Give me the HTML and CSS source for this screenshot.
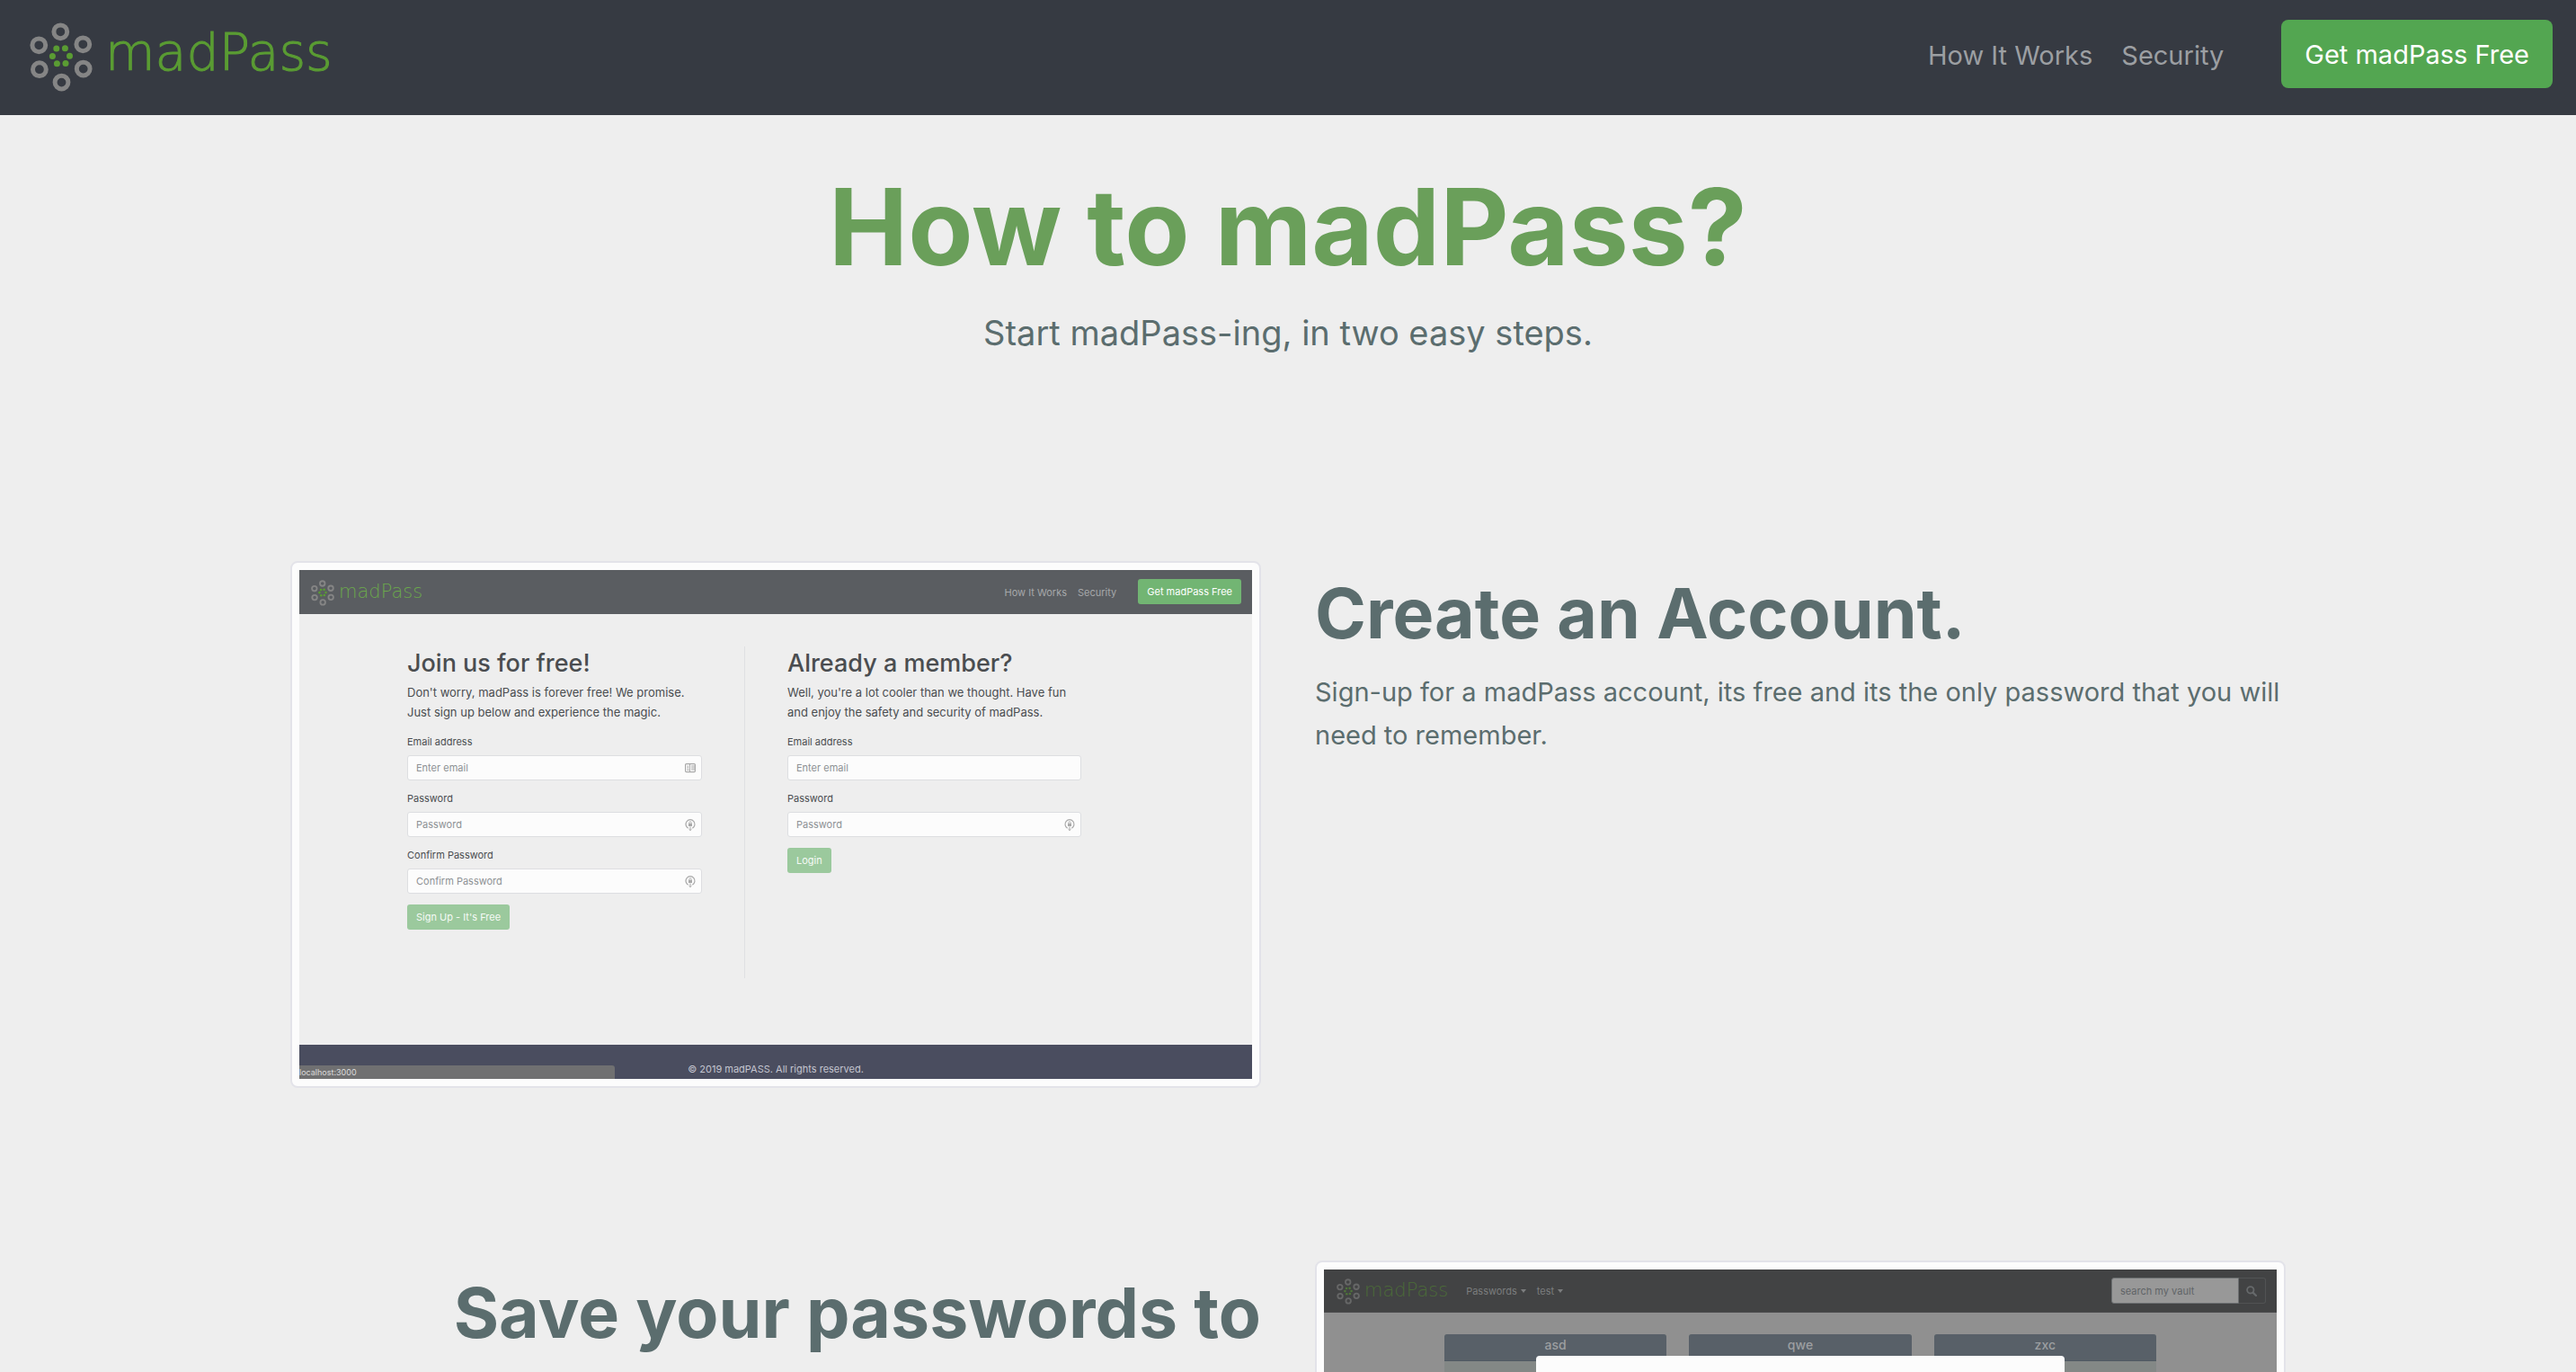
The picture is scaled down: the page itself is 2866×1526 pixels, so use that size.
FILE: index.html
```html
<!DOCTYPE html>
<html lang="en">
<head>
  <meta charset="utf-8">
  <title>madPass - How It Works</title>
  <link rel="stylesheet" href="styles.css">
</head>
<body>
  <svg class="sprite" aria-hidden="true">
    <symbol id="mark" viewBox="0 0 70 77">
      <g fill="none" stroke="#858585" stroke-width="5">
        <circle cx="34.3" cy="10.3" r="7.4"/><circle cx="10.3" cy="25.3" r="7.4"/>
        <circle cx="59.3" cy="24.3" r="7.4"/><circle cx="10.9" cy="52.2" r="7.4"/>
        <circle cx="59.7" cy="51.6" r="7.4"/><circle cx="35.5" cy="66.6" r="7.4"/>
      </g>
      <g fill="#5a9c33">
        <circle cx="29.8" cy="29" r="3.5"/><circle cx="39.4" cy="28.7" r="3.5"/>
        <circle cx="25.4" cy="37.4" r="3.5"/><circle cx="44.5" cy="37.2" r="3.5"/>
        <circle cx="30.4" cy="45.8" r="3.5"/><circle cx="40" cy="45.4" r="3.5"/>
      </g>
    </symbol>
    <symbol id="lock" viewBox="0 0 12 14">
      <path d="M3.6 11.1A5 5 0 1 1 8.4 11.1" fill="none" stroke="#a9a9a9" stroke-width="1.2"/>
      <path d="M6 9.5v4M4.5 12.2 6 13.6l1.5-1.4" fill="none" stroke="#a9a9a9"/>
      <path d="M4.9 6V4.8a1.1 1.1 0 0 1 2.2 0V6" fill="none" stroke="#a9a9a9" stroke-width=".8"/>
      <rect x="4" y="5.8" width="4" height="3.2" fill="#a9a9a9"/>
    </symbol>
  </svg>

  <header class="topbar">
    <a class="brand" href="#"><svg class="brand-mark"><use href="#mark"/></svg><span class="brand-name">madPass</span></a>
    <nav class="links">
      <a href="#">How It Works</a>
      <a href="#">Security</a>
      <button class="cta" type="button">Get madPass Free</button>
    </nav>
  </header>

  <main class="page">
    <section class="intro">
      <h1>How to madPass?</h1>
      <p>Start madPass-ing, in two easy steps.</p>
    </section>

    <section class="step first">
      <div class="frame">
        <div class="shot">
          <div class="mini-bar">
            <a class="brand" href="#"><svg class="brand-mark"><use href="#mark"/></svg><span class="brand-name">madPass</span></a>
            <div class="links">
              <a href="#">How It Works</a>
              <a href="#">Security</a>
              <button class="cta" type="button">Get madPass Free</button>
            </div>
          </div>
          <div class="forms">
            <form class="form">
              <h3>Join us for free!</h3>
              <p>Don't worry, madPass is forever free! We promise.<br>Just sign up below and experience the magic.</p>
              <label for="su-email">Email address</label>
              <div class="field">
                <input id="su-email" type="email" placeholder="Enter email">
                <svg class="hint" viewBox="0 0 12 14"><rect x=".6" y="2.6" width="10.8" height="9" rx="1" fill="none" stroke="#a9a9a9" stroke-width="1.2"/><path d="M5.5 2.5v9M7 5h4M7 7h4M7 9h4M3.3 4.5v4M2.5 9.5h2" stroke="#a9a9a9"/></svg>
              </div>
              <label for="su-pass">Password</label>
              <div class="field">
                <input id="su-pass" type="password" placeholder="Password">
                <svg class="hint"><use href="#lock"/></svg>
              </div>
              <label for="su-confirm">Confirm Password</label>
              <div class="field">
                <input id="su-confirm" type="password" placeholder="Confirm Password">
                <svg class="hint"><use href="#lock"/></svg>
              </div>
              <button type="button">Sign Up - It's Free</button>
            </form>
            <form class="form">
              <h3>Already a member?</h3>
              <p>Well, you're a lot cooler than we thought. Have fun<br>and enjoy the safety and security of madPass.</p>
              <label for="li-email">Email address</label>
              <div class="field"><input id="li-email" type="email" placeholder="Enter email"></div>
              <label for="li-pass">Password</label>
              <div class="field">
                <input id="li-pass" type="password" placeholder="Password">
                <svg class="hint"><use href="#lock"/></svg>
              </div>
              <button type="button">Login</button>
            </form>
          </div>
          <div class="mini-foot">© 2019 madPASS. All rights reserved.</div>
          <div class="status">localhost:3000</div>
        </div>
      </div>
      <div class="copy">
        <h2>Create an Account.</h2>
        <p>Sign-up for a madPass account, its free and its the only password that you will need to remember.</p>
      </div>
    </section>

    <section class="step">
      <div class="copy copy-right">
        <h2>Save your passwords to</h2>
      </div>
      <div class="frame">
        <div class="shot vault">
          <div class="mini-bar dim">
            <a class="brand" href="#"><svg class="brand-mark"><use href="#mark"/></svg><span class="brand-name">madPass</span></a>
            <div class="menus">
              <a href="#">Passwords</a>
              <a href="#">test</a>
            </div>
            <form class="search">
              <input type="search" aria-label="search my vault" placeholder="search my vault">
              <button type="button" aria-label="Search"><svg viewBox="0 0 12 12"><circle cx="4.8" cy="4.8" r="3.7" fill="none" stroke="#66696b" stroke-width="1.8"/><path d="M7.6 7.6 11 11" stroke="#66696b" stroke-width="2.2" stroke-linecap="round"/></svg></button>
            </form>
          </div>
          <div class="cards">
            <article class="card"><h4>asd</h4></article>
            <article class="card"><h4>qwe</h4></article>
            <article class="card"><h4>zxc</h4></article>
          </div>
          <div class="modal"></div>
        </div>
      </div>
    </section>
  </main>
</body>
</html>
```

FILE: styles.css
```css
* { box-sizing: border-box; }

body {
  display: flex;
  flex-direction: column;
  margin: 0;
  height: 100vh;
  overflow: hidden;
  background: #eee;
  color: #5b6d6e;
  font-family: Inter, "Liberation Sans", sans-serif;
  font-size: 29px;
}

h1, h2, h3, h4, p { margin: 0; }
a { color: inherit; text-decoration: none; }
button, input { font: inherit; }
.sprite { position: absolute; width: 0; height: 0; }

/* top bar */
.topbar {
  display: flex;
  flex: none;
  justify-content: space-between;
  align-items: flex-start;
  height: 128px;
  padding: 22px 26px 0 33px;
  background: #363a42;
}
.brand { display: flex; align-items: flex-start; gap: 14px; }
.brand-mark { width: 70px; height: 77px; margin-top: 3px; }
.brand-name {
  color: #5a9c33;
  font-family: "DejaVu Sans Light", "DejaVu Sans", sans-serif;
  font-size: 57px;
  font-weight: 200;
  line-height: 72px;
}
.topbar .brand-name { -webkit-text-stroke: 1px #5a9c33; }
.links { display: flex; align-items: center; gap: 32px; color: #9c9fa2; }
.topbar .links a { padding-top: 2px; }
.cta {
  height: 76px;
  margin-left: 32px;
  padding: 0 26px;
  border: 0;
  border-radius: 8px;
  background: #53a651;
  color: #fff;
}

/* intro */
.page { flex: 1; min-height: 0; overflow: hidden; }
.intro { padding: 64px 0 0; text-align: center; }
.intro h1 { color: #6a9f5a; font-size: 118px; line-height: 120px; }
.intro p { margin-top: 28px; font-size: 38px; line-height: 60px; }

/* steps */
.step {
  display: grid;
  grid-template-columns: 1fr 1fr;
  gap: 60px;
  max-width: 2220px;
  margin: 192px auto 0;
}
.step.first { margin-top: 224px; }
.frame {
  padding: 8px;
  border: 2px solid #e3e3e9;
  border-radius: 8px;
  background: #fcfcfc;
}
.copy { padding-top: 10px; }
.copy h2 { font-size: 77px; line-height: 96px; }
.copy p { margin-top: 16px; line-height: 48px; }
.copy-right { text-align: right; }

/* product screenshots */
.shot {
  position: relative;
  display: flex;
  flex-direction: column;
  min-height: 566px;
  background: #eee;
  color: #4a4d50;
  font-size: 11px;
  overflow: hidden;
}
.mini-bar {
  display: flex;
  justify-content: space-between;
  height: 49px;
  padding: 10px 12px 0 13px;
  background: #5a5d61;
}
.mini-bar .brand { gap: 5px; }
.mini-bar .brand-mark { width: 26px; height: 29px; margin-top: 1px; }
.mini-bar .brand-name { font-size: 21px; line-height: 28px; color: #6ba84c; }
.mini-bar .links { align-items: flex-start; gap: 12px; color: #a6a8aa; line-height: 31px; }
.mini-bar .cta {
  height: 28px;
  margin-left: 12px;
  padding: 0 10px;
  border-radius: 3px;
  background: #72b573;
  line-height: 28px;
}

.forms {
  display: grid;
  grid-template-columns: 375px 375px;
  flex: 1;
  padding: 36px 120px 74px;
}
.form { display: flex; flex-direction: column; align-items: flex-start; padding-right: 47px; }
.form + .form { padding: 0 0 0 47px; border-left: 1px solid #dfe0e2; }
.form h3 { margin-bottom: 4px; padding-top: 2px; font-size: 27px; font-weight: 500; line-height: 34px; }
.form p { margin-bottom: 12px; font-size: 13px; line-height: 22px; white-space: nowrap; }
.form label { line-height: 20px; }
.field { position: relative; width: 100%; margin: 5px 0 10px; }
.field input {
  display: block;
  width: 100%;
  height: 28px;
  padding: 0 9px;
  border: 1px solid #dddee1;
  border-radius: 3px;
  background: #fcfcfc;
}
.field input::placeholder { color: #8d9194; }
.hint { position: absolute; top: 7px; right: 7px; width: 12px; height: 14px; }
.form button {
  height: 28px;
  margin-top: 2px;
  padding: 0 10px;
  border: 0;
  border-radius: 3px;
  background: #9bc99d;
  color: #f6faf6;
}
.mini-foot {
  height: 38px;
  padding-top: 15px;
  background: #4a4d5f;
  color: #c4c5cf;
  line-height: 24px;
  text-align: center;
}
.status {
  position: absolute;
  left: 0;
  bottom: 0;
  width: 351px;
  height: 15px;
  border-top-right-radius: 3px;
  background: #707071;
  color: #dcdcdc;
  font-size: 9px;
  line-height: 15px;
}

/* vault screenshot, behind its dialog backdrop */
.vault { background: #909090; }
.mini-bar.dim { justify-content: flex-start; height: 48px; padding: 9px 12px 0 14px; border-bottom: 1px solid #4b4c4d; background: #424344; color: #7b7d7e; }
.dim .brand-name { color: #4b6b38; }
.dim .brand-mark { opacity: .55; }
.menus { display: flex; gap: 12px; padding-left: 20px; line-height: 30px; }
.menus a { display: flex; align-items: center; height: 30px; gap: 4px; }
.menus a::after { content: ""; border: 3px solid transparent; border-top: 4px solid #7b7d7e; border-bottom: 0; }
.search { display: flex; height: 29px; margin-left: auto; }
.search input {
  width: 142px;
  padding: 0 9px;
  border: 1px solid #6d7072;
  border-radius: 3px 0 0 3px;
  background: #989898;
}
.search input::placeholder { color: #606467; }
.search button {
  width: 30px;
  padding: 0 8px;
  border: 1px solid #515354;
  border-left: 0;
  border-radius: 0 3px 3px 0;
  background: none;
}
.search svg { display: block; width: 12px; height: 12px; }
.cards { display: grid; grid-template-columns: repeat(3, 1fr); gap: 25px; flex: 1; padding: 24px 134px; }
.card { border-radius: 3px; background: #838886; overflow: hidden; }
.card h4 {
  height: 30px;
  border-bottom: 1px solid #505a63;
  background: #586068;
  color: #9c9fa1;
  font-size: 14px;
  font-weight: 500;
  line-height: 24px;
  text-align: center;
}
.modal {
  position: absolute;
  top: 96px;
  left: 236px;
  right: 236px;
  bottom: 96px;
  border-radius: 4px;
  background: #fcfcfc;
}
```
